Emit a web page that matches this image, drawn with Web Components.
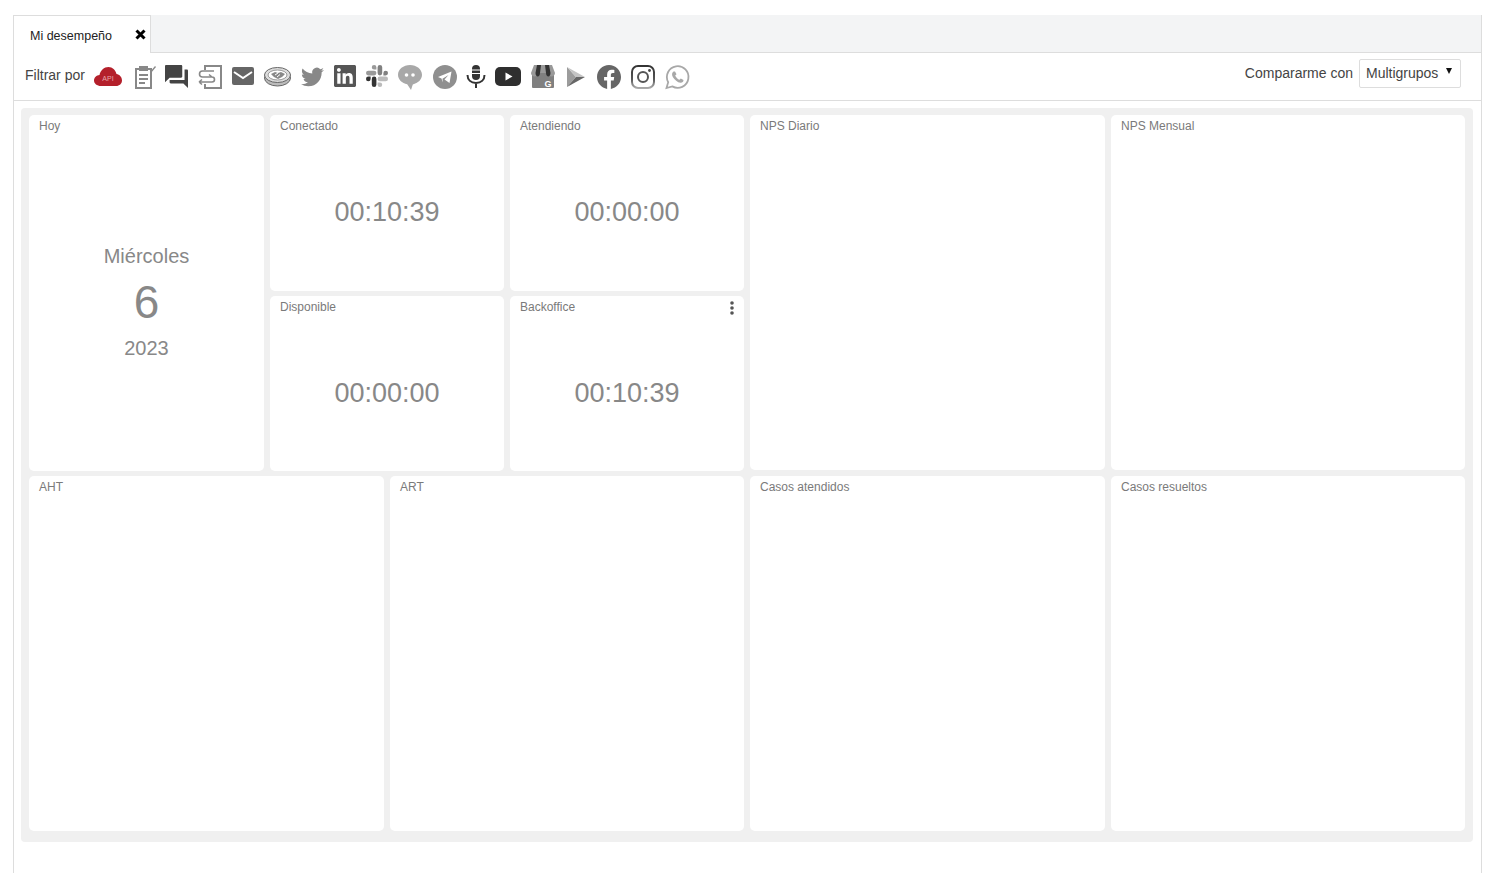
<!DOCTYPE html>
<html lang="es">
<head>
<meta charset="utf-8">
<title>Mi desempeño</title>
<style>
  html, body { margin: 0; height: 100%; background: #fff; overflow: hidden; }
  body { font-family: "Liberation Sans", Arial, sans-serif; }
</style>
</head>
<body>
<perf-page>
  <perf-tabs label="Mi desempeño"></perf-tabs>
  <perf-toolbar>
    <perf-icon name="api"></perf-icon>
    <perf-icon name="clipboard"></perf-icon>
    <perf-icon name="chat"></perf-icon>
    <perf-icon name="transfer"></perf-icon>
    <perf-icon name="mail"></perf-icon>
    <perf-icon name="handshake"></perf-icon>
    <perf-icon name="twitter"></perf-icon>
    <perf-icon name="linkedin"></perf-icon>
    <perf-icon name="slack"></perf-icon>
    <perf-icon name="bubble"></perf-icon>
    <perf-icon name="telegram"></perf-icon>
    <perf-icon name="mic"></perf-icon>
    <perf-icon name="youtube"></perf-icon>
    <perf-icon name="business"></perf-icon>
    <perf-icon name="play"></perf-icon>
    <perf-icon name="facebook"></perf-icon>
    <perf-icon name="instagram"></perf-icon>
    <perf-icon name="whatsapp"></perf-icon>
    <perf-select slot="end" label="Compararme con" value="Multigrupos"></perf-select>
  </perf-toolbar>
  <perf-board>
    <perf-card title="Hoy" style="grid-area: 1 / 1 / 3 / 2">
      <perf-date weekday="Miércoles" day="6" year="2023"></perf-date>
    </perf-card>
    <perf-card title="Conectado" style="grid-area: 1 / 2 / 2 / 4"><perf-timer>00:10:39</perf-timer></perf-card>
    <perf-card title="Atendiendo" style="grid-area: 1 / 4 / 2 / 5"><perf-timer>00:00:00</perf-timer></perf-card>
    <perf-card title="NPS Diario" short style="grid-area: 1 / 5 / 3 / 6"></perf-card>
    <perf-card title="NPS Mensual" short style="grid-area: 1 / 6 / 3 / 7"></perf-card>
    <perf-card title="Disponible" style="grid-area: 2 / 2 / 3 / 4"><perf-timer>00:00:00</perf-timer></perf-card>
    <perf-card title="Backoffice" menu style="grid-area: 2 / 4 / 3 / 5"><perf-timer>00:10:39</perf-timer></perf-card>
    <perf-card title="AHT" style="grid-area: 3 / 1 / 4 / 3"></perf-card>
    <perf-card title="ART" style="grid-area: 3 / 3 / 4 / 5"></perf-card>
    <perf-card title="Casos atendidos" style="grid-area: 3 / 5 / 4 / 6"></perf-card>
    <perf-card title="Casos resueltos" style="grid-area: 3 / 6 / 4 / 7"></perf-card>
  </perf-board>
</perf-page>

<script>
(() => {
  /**
   * Attach an open shadow root with the given markup.
   *
   * @param {HTMLElement} element
   * @param {string} html
   */
  const render = (element, html) => {
    const root = element.shadowRoot || element.attachShadow({ mode: 'open' });
    root.innerHTML = html;
  };

  // Every icon is drawn on a box 26px high, so they all share one baseline in the toolbar.
  const ICONS = {
    api: { width: 28, gap: 0, body: `
      <path fill="#b4202b" d="M7 22C3 22 0 19.5 0 16.5 0 13.5 2.5 11.2 5.5 11 6.5 6.5 10 3 14.5 3 18.5 3 21.5 6 22.5 10 25.5 10.5 28 13 28 16.5 28 19.5 25.5 22 22 22Z"/>
      <text x="14" y="16.5" text-anchor="middle" font-size="7" fill="#e8a5a9" font-family="Liberation Sans, sans-serif">API</text>` },
    clipboard: { width: 22, gap: 12, body: `
      <path fill="none" stroke="#888" stroke-width="2" d="M5 5H2V24H17V5H14"/>
      <rect x="5" y="2" width="9" height="5" fill="#888"/>
      <path fill="none" stroke="#888" stroke-width="2" d="M5 11H14M5 15H14M5 19H11"/>
      <path fill="#888" d="M16 8 21 2 22 3 17 9Z"/>` },
    chat: { width: 23, gap: 9, body: `
      <path fill="#444" transform="translate(-2.3 -1.3) scale(1.15)" d="M21 6h-2v9H6v2c0 .55.45 1 1 1h11l4 4V7c0-.55-.45-1-1-1zm-4 6V3c0-.55-.45-1-1-1H3c-.55 0-1 .45-1 1v14l4-4h10c.55 0 1-.45 1-1z"/>` },
    transfer: { width: 24, gap: 10, body: `
      <path fill="none" stroke="#888" stroke-width="2" d="M7 6V2H23V24H7V20"/>
      <path fill="none" stroke="#888" stroke-width="1.6" d="M16 7H4.5A3 3 0 0 0 4.5 13H14M14 13 11 10.5M1 18H14A2.5 2.5 0 0 0 14 13M1 18 4 15.5M1 18 4 20.5"/>` },
    mail: { width: 22, gap: 10, body: `
      <rect y="3" width="22" height="18" rx="2" fill="#666"/>
      <path fill="none" stroke="#fff" stroke-width="2" d="M2 8 11 14 20 8"/>` },
    handshake: { width: 27, gap: 10, body: `
      <ellipse cx="13.5" cy="14" rx="13" ry="8" fill="#bbb" stroke="#666"/>
      <ellipse cx="13.5" cy="11" rx="13" ry="7.5" fill="#ddd" stroke="#666"/>
      <ellipse cx="13.5" cy="11" rx="9.5" ry="5" fill="#fff" stroke="#999"/>
      <path fill="#888" d="M7 10 11 8 14 9 17 8 21 10 18 13 14 15 10 13Z"/>
      <path fill="none" stroke="#fff" d="M11 11 14 9M13 13 16 10.5"/>` },
    twitter: { width: 23, gap: 10, body: `
      <path fill="#888" transform="translate(0 1.5) scale(.958)" d="M23.953 4.57a10 10 0 01-2.825.775 4.958 4.958 0 002.163-2.723c-.951.555-2.005.959-3.127 1.184a4.92 4.92 0 00-8.384 4.482C7.69 8.095 4.067 6.13 1.64 3.162a4.822 4.822 0 00-.666 2.475c0 1.71.87 3.213 2.188 4.096a4.904 4.904 0 01-2.228-.616v.06a4.923 4.923 0 003.946 4.827 4.996 4.996 0 01-2.212.085 4.936 4.936 0 004.604 3.417 9.867 9.867 0 01-6.102 2.105c-.39 0-.779-.023-1.17-.067a13.995 13.995 0 007.557 2.209c9.053 0 13.998-7.496 13.998-13.985 0-.21 0-.42-.015-.63A9.935 9.935 0 0024 4.59z"/>` },
    linkedin: { width: 22, gap: 10, body: `
      <path fill="#555" transform="translate(0 1) scale(.917)" d="M20.447 20.452h-3.554v-5.569c0-1.328-.027-3.037-1.852-3.037-1.853 0-2.136 1.445-2.136 2.939v5.667H9.351V9h3.414v1.561h.046c.477-.9 1.637-1.85 3.37-1.85 3.601 0 4.267 2.37 4.267 5.455v6.286zM5.337 7.433c-1.144 0-2.063-.926-2.063-2.065 0-1.138.92-2.063 2.063-2.063 1.14 0 2.064.925 2.064 2.063 0 1.139-.925 2.065-2.064 2.065zm1.782 13.019H3.555V9h3.564v11.452zM22.225 0H1.771C.792 0 0 .774 0 1.729v20.542C0 23.227.792 24 1.771 24h20.451C23.2 24 24 23.227 24 22.271V1.729C24 .774 23.2 0 22.222 0h.003z"/>` },
    slack: { width: 22, gap: 10, body: `
      <g transform="translate(0 1) scale(.917)">
        <path fill="#333" d="M5.042 15.165a2.528 2.528 0 0 1-2.52 2.523A2.528 2.528 0 0 1 0 15.165a2.527 2.527 0 0 1 2.522-2.52h2.52v2.52zM6.313 15.165a2.527 2.527 0 0 1 2.521-2.52 2.527 2.527 0 0 1 2.521 2.52v6.313A2.528 2.528 0 0 1 8.834 24a2.528 2.528 0 0 1-2.521-2.522v-6.313z"/>
        <path fill="#999" d="M8.834 5.042a2.528 2.528 0 0 1-2.521-2.52A2.528 2.528 0 0 1 8.834 0a2.528 2.528 0 0 1 2.521 2.522v2.52H8.834zM8.834 6.313a2.528 2.528 0 0 1 2.521 2.521 2.528 2.528 0 0 1-2.521 2.521H2.522A2.528 2.528 0 0 1 0 8.834a2.528 2.528 0 0 1 2.522-2.521h6.312z"/>
        <path fill="#808080" d="M18.956 8.834a2.528 2.528 0 0 1 2.522-2.521A2.528 2.528 0 0 1 24 8.834a2.528 2.528 0 0 1-2.522 2.521h-2.522V8.834zM17.688 8.834a2.528 2.528 0 0 1-2.523 2.521 2.527 2.527 0 0 1-2.52-2.521V2.522A2.527 2.527 0 0 1 15.165 0a2.528 2.528 0 0 1 2.523 2.522v6.312z"/>
        <path fill="#bbb" d="M15.165 18.956a2.528 2.528 0 0 1 2.523 2.522A2.528 2.528 0 0 1 15.165 24a2.527 2.527 0 0 1-2.52-2.522v-2.522h2.52zM15.165 17.688a2.527 2.527 0 0 1-2.52-2.523 2.526 2.526 0 0 1 2.52-2.52h6.313A2.527 2.527 0 0 1 24 15.165a2.528 2.528 0 0 1-2.522 2.523h-6.313z"/>
      </g>` },
    bubble: { width: 24, gap: 10, body: `
      <path fill="#a8a8a8" d="M12 1C5.4 1 0 5.3 0 10.8 0 15.5 4 19.4 9.2 20.3L13 26 14.8 20.4C20 19.4 24 15.5 24 10.8 24 5.3 18.6 1 12 1Z"/>
      <circle cx="8.5" cy="11" r="1.8" fill="#fff"/>
      <circle cx="15" cy="11" r="1.8" fill="#fff"/>` },
    telegram: { width: 24, gap: 11, body: `
      <circle cx="12" cy="13" r="12" fill="#8f8f8f"/>
      <path fill="#fff" d="M5 13 18.5 7.5 16.5 19 11.5 15.5 15.5 11 9.5 14.8 9.8 18.5 8.5 14.5Z"/>` },
    mic: { width: 20, gap: 9, body: `
      <rect x="6" y="1" width="8" height="15" rx="4" fill="#333"/>
      <path fill="none" stroke="#fff" d="M5 6H15M5 9.5H15"/>
      <path fill="none" stroke="#333" stroke-width="2" d="M1.5 11C1.5 16 5 19 10 19S18.5 16 18.5 11M10 19V24"/>` },
    youtube: { width: 26, gap: 9, body: `
      <rect y="3" width="26" height="19" rx="5" fill="#2f2f2f"/>
      <path fill="#fff" d="M10.5 8.5 17.5 12.5 10.5 16.5Z"/>` },
    business: { width: 24, gap: 10, body: `
      <rect x="1" y="9" width="22" height="15" rx="1" fill="#808080"/>
      <path fill="#999" d="M3 1H21L24 9C24 11 22 12.5 20.5 12.5S17.500 11 16 9H8C6.500 11 5 12.500 3.500 12.500S0 11 0 9Z"/>
      <path fill="#333" d="M6 1H10L9 9C9 11 8 12.500 6.800 12.500S4.500 11 4.500 9ZM14 1H18L19.500 9C19.500 11 18.500 12.500 17.300 12.500S15 11 15 9Z"/>
      <text x="17" y="23" text-anchor="middle" font-size="9" font-weight="700" fill="#fff" font-family="Liberation Sans, sans-serif">G</text>` },
    play: { width: 18, gap: 12, body: `
      <path fill="#9c9c9c" d="M0 3 9 13 0 23Z"/>
      <path fill="#c4c4c4" d="M0 3 18 13H9Z"/>
      <path fill="#666" d="M0 23 9 13H18Z"/>` },
    facebook: { width: 24, gap: 12, body: `
      <path fill="#666" transform="translate(0 1)" d="M24 12.073c0-6.627-5.373-12-12-12s-12 5.373-12 12c0 5.99 4.388 10.954 10.125 11.854v-8.385H7.078v-3.47h3.047V9.43c0-3.007 1.792-4.669 4.533-4.669 1.312 0 2.686.235 2.686.235v2.953H15.83c-1.491 0-1.956.925-1.956 1.874v2.25h3.328l-.532 3.47h-2.796v8.385C19.612 23.027 24 18.062 24 12.073z"/>` },
    instagram: { width: 24, gap: 10, body: `
      <defs><linearGradient id="ig" x1="0" y1="0" x2="0" y2="1"><stop offset="0" stop-color="#333"/><stop offset=".6" stop-color="#555"/><stop offset="1" stop-color="#aaa"/></linearGradient></defs>
      <rect x="1" y="2" width="22" height="22" rx="6" fill="none" stroke="url(#ig)" stroke-width="2"/>
      <circle cx="12" cy="13" r="5" fill="none" stroke="#555" stroke-width="2"/>
      <circle cx="18.500" cy="6.500" r="1.400" fill="#444"/>` },
    whatsapp: { width: 24, gap: 10, body: `
      <path fill="none" stroke="#a8a8a8" stroke-width="1.800" d="M1.500 24 3.200 18.200A10.800 10.800 0 1 1 7.300 22.400Z"/>
      <path fill="#a8a8a8" d="M8.500 7.500C7 8.500 6.500 10.500 7.800 13 9.500 16 12.500 18.400 15.500 18.800 17.300 18.900 18.500 17.700 18.500 16L15.800 14.500 14.500 15.800C12.700 15.200 10.800 13.300 10.200 11.500L11.500 10.200 10 7.500Z"/>` },
  };

  class PerfPage extends HTMLElement {
    connectedCallback() {
      render(this, `
        <style>
          :host {
            display: block;
            box-sizing: border-box;
            height: 858px;
            margin: 15px 13px 0;
            border-right: 1px solid #ddd;
            border-left: 1px solid #ddd;
            overflow: hidden;
          }
        </style>
        <slot></slot>
      `);
    }
  }

  class PerfTabs extends HTMLElement {
    connectedCallback() {
      const label = this.getAttribute('label') || '';
      render(this, `
        <style>
          :host {
            display: flex;
            height: 38px;
            box-sizing: border-box;
            margin-left: -1px;
            background: #f3f4f5;
            border-bottom: 1px solid #ddd;
            font-size: 12.500px;
          }
          .tab {
            display: flex;
            align-items: center;
            box-sizing: border-box;
            width: 138px;
            height: 38px;
            padding: 3px 4px 0 16px;
            background: #fff;
            border: 1px solid #ddd;
            border-bottom: 0;
            color: #222;
          }
          .label { flex: 1; }
          svg { display: block; margin: -3px 0 0; }
        </style>
        <div class="tab">
          <span class="label">${label}</span>
          <svg width="11" height="11" viewBox="0 0 11 11"><path fill="none" stroke="#000" stroke-width="3" d="M1.500 1.500 9.500 9.500M9.500 1.500 1.500 9.500"/></svg>
        </div>
      `);
    }
  }

  class PerfToolbar extends HTMLElement {
    connectedCallback() {
      render(this, `
        <style>
          :host {
            display: flex;
            align-items: center;
            box-sizing: border-box;
            height: 48px;
            padding: 0 20px 0 11px;
            background: #fff;
            border-bottom: 1px solid #ddd;
          }
          .label { margin: -4px 9px 0 0; font-size: 14px; color: #444; }
          .icons { display: flex; align-items: center; flex: 1; }
        </style>
        <span class="label">Filtrar por</span>
        <div class="icons"><slot></slot></div>
        <slot name="end"></slot>
      `);
    }
  }

  class PerfIcon extends HTMLElement {
    connectedCallback() {
      const icon = ICONS[this.getAttribute('name')];
      if (!icon) {
        return;
      }

      render(this, `
        <style>
          :host { display: block; flex: none; height: 26px; margin-left: ${icon.gap}px; }
          svg { display: block; overflow: visible; }
        </style>
        <svg width="${icon.width}" height="26" viewBox="0 0 ${icon.width} 26">${icon.body}</svg>
      `);
    }
  }

  class PerfSelect extends HTMLElement {
    connectedCallback() {
      render(this, `
        <style>
          :host {
            display: flex;
            align-items: center;
            gap: 6px;
            margin-top: -7px;
            font-size: 14px;
            color: #444;
          }
          .box {
            display: flex;
            align-items: center;
            box-sizing: border-box;
            width: 102px;
            height: 29px;
            padding: 0 6px;
            border: 1px solid #ddd;
            border-radius: 2px;
            background: #fff;
          }
          .value { flex: 1; }
          .caret {
            width: 0;
            height: 0;
            margin: -4px 2px 0 0;
            border-top: 6px solid #111;
            border-right: 3px solid transparent;
            border-left: 3px solid transparent;
          }
        </style>
        <span>${this.getAttribute('label')}</span>
        <div class="box"><span class="value">${this.getAttribute('value')}</span><span class="caret"></span></div>
      `);
    }
  }

  class PerfBoard extends HTMLElement {
    connectedCallback() {
      render(this, `
        <style>
          :host {
            display: grid;
            grid-template-columns: 235px 114px 114px 234px 355px 354px;
            grid-template-rows: 176px 175px 355px;
            gap: 5px 6px;
            box-sizing: border-box;
            width: 1452px;
            margin: 7px 7px 0;
            padding: 7px 8px 11px;
            background: #f0f0f0;
            border-radius: 4px;
          }
        </style>
        <slot></slot>
      `);
    }
  }

  class PerfCard extends HTMLElement {
    connectedCallback() {
      const menu = this.hasAttribute('menu')
        ? '<svg width="4" height="14" viewBox="0 0 4 14"><circle cx="2" cy="2" r="1.800"/><circle cx="2" cy="7" r="1.800"/><circle cx="2" cy="12" r="1.800"/></svg>'
        : '';
      render(this, `
        <style>
          :host {
            display: flex;
            flex-direction: column;
            min-width: 0;
            background: #fff;
            border-radius: 5px;
            color: #888;
          }
          :host([short]) { margin-bottom: 1px; }
          header {
            display: flex;
            align-items: flex-start;
            justify-content: space-between;
            height: 18px;
            padding: 4px 10px 0;
            box-sizing: border-box;
            font-size: 12px;
            line-height: 14px;
            color: #7a7a7a;
          }
          svg { display: block; margin: 1px -0 0; fill: #555; }
          .body { flex: 1; display: flex; align-items: center; justify-content: center; }
        </style>
        <header><span>${this.getAttribute('title')}</span>${menu}</header>
        <div class="body"><slot></slot></div>
      `);
      this.removeAttribute('title');
    }
  }

  class PerfTimer extends HTMLElement {
    connectedCallback() {
      render(this, `
        <style>
          :host { display: block; font-size: 27px; line-height: 32px; color: #888; }
        </style>
        <slot></slot>
      `);
    }
  }

  class PerfDate extends HTMLElement {
    connectedCallback() {
      render(this, `
        <style>
          :host {
            display: grid;
            grid-auto-rows: 46px;
            align-items: center;
            text-align: center;
            font-size: 20px;
            color: #888;
          }
          .day { font-size: 46px; }
        </style>
        <div>${this.getAttribute('weekday')}</div>
        <div class="day">${this.getAttribute('day')}</div>
        <div>${this.getAttribute('year')}</div>
      `);
    }
  }

  customElements.define('perf-page', PerfPage);
  customElements.define('perf-tabs', PerfTabs);
  customElements.define('perf-toolbar', PerfToolbar);
  customElements.define('perf-icon', PerfIcon);
  customElements.define('perf-select', PerfSelect);
  customElements.define('perf-board', PerfBoard);
  customElements.define('perf-card', PerfCard);
  customElements.define('perf-timer', PerfTimer);
  customElements.define('perf-date', PerfDate);
})();
</script>
</body>
</html>
